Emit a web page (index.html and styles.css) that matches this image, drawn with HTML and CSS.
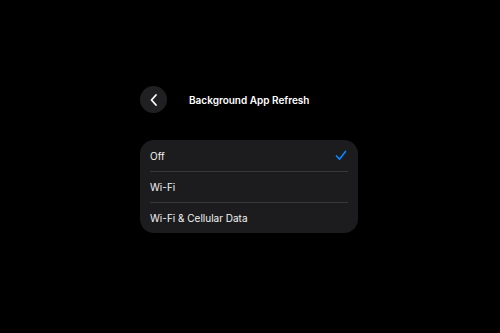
FILE: index.html
```html
<!DOCTYPE html>
<html>
<head>
<meta charset="utf-8">
<link rel="stylesheet" href="styles.css">
</head>
<body>
<div class="page">
  <div class="panel">
    <div class="header">
      <button class="back" aria-label="Back">
        <svg width="12" height="14" viewBox="0 0 12 14"><path d="M8 2 L3.5 7 L8 12" fill="none" stroke="#fff" stroke-width="1.8" stroke-linecap="round" stroke-linejoin="round"/></svg>
      </button>
      <div class="title">Background App Refresh</div>
    </div>
    <div class="card">
      <div class="row"><span>Off</span>
        <svg class="check" width="12" height="11" viewBox="0 0 12 11"><path d="M1.5 6 L4.5 9.2 L10.5 1.5" fill="none" stroke="#0a84ff" stroke-width="1.7" stroke-linecap="round" stroke-linejoin="round"/></svg>
      </div>
      <div class="row"><span>Wi-Fi</span></div>
      <div class="row"><span>Wi-Fi &amp; Cellular Data</span></div>
    </div>
  </div>
</div>
</body>
</html>
```
FILE: styles.css
```css
html, body {
  margin: 0;
  background: #000;
  width: 500px;
  height: 333px;
  overflow: hidden;
  font-family: Inter, "Noto Sans", sans-serif;
  color: #fff;
}
.page {
  padding-top: 86px;
  padding-left: 140px;
}
.panel {
  width: 218px;
  display: flex;
  flex-direction: column;
  gap: 27px;
}
.header {
  display: flex;
  align-items: center;
  gap: 22px;
  height: 27px;
}
.back {
  width: 27px;
  height: 27px;
  border-radius: 50%;
  border: none;
  background: #202022;
  padding: 0;
  display: flex;
  align-items: center;
  justify-content: center;
}
.title {
  font-size: 10px;
  font-weight: 600;
}
.card {
  background: #1c1c1e;
  border-radius: 14px;
  padding: 0 10px;
}
.row {
  height: 31px;
  display: flex;
  align-items: center;
  justify-content: space-between;
  font-size: 10px;
  color: #f2f2f2;
  border-top: 1px solid #38383a;
  box-sizing: border-box;
}
.row:first-child { border-top: none; }
.check { margin-right: 1px; }
```
